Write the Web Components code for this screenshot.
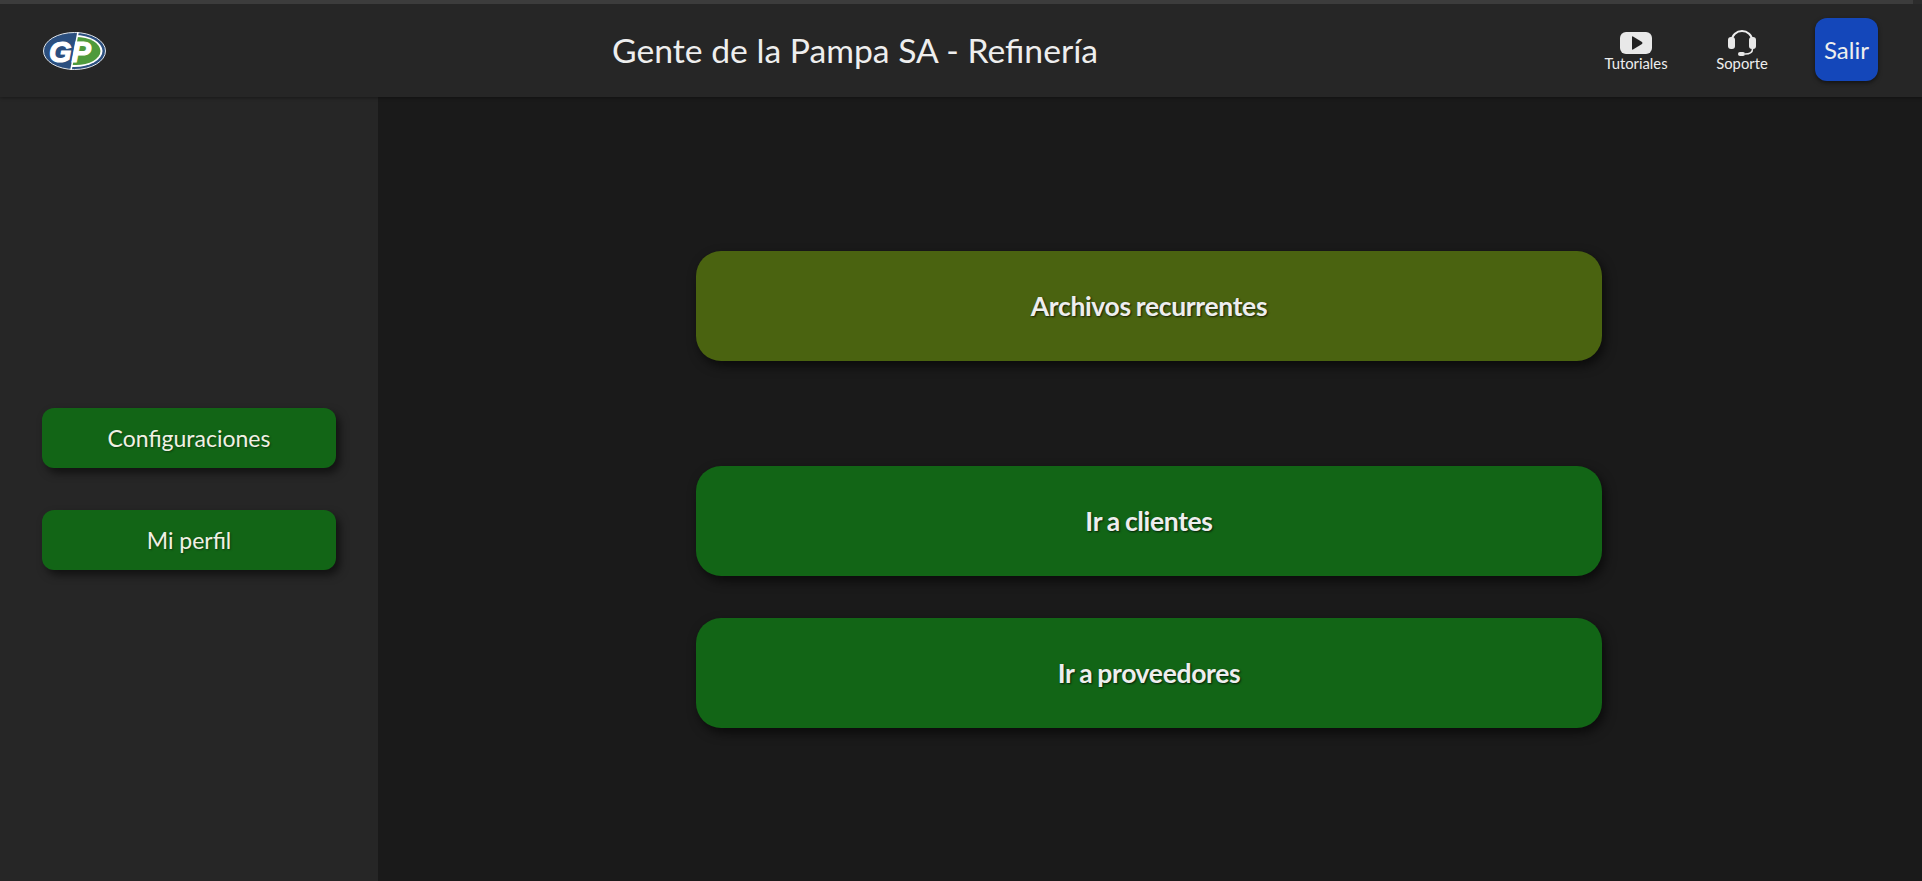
<!DOCTYPE html>
<html lang="es">
<head>
<meta charset="utf-8">
<title>Gente de la Pampa SA - Refinería</title>
<style>
  html, body { margin: 0; height: 100%; background: #1a1a1a; overflow: hidden; }
  body { font-family: Lato, "Liberation Sans", sans-serif; color: #eee; }
</style>
</head>
<body>
<app-shell>
  <app-header slot="header" title-text="Gente de la Pampa SA - Refinería"></app-header>
  <side-bar slot="side">
    <green-button>Configuraciones</green-button>
    <green-button>Mi perfil</green-button>
  </side-bar>
  <main-panel slot="main">
    <big-button color="#4a6310">Archivos recurrentes</big-button>
    <big-button>Ir a clientes</big-button>
    <big-button>Ir a proveedores</big-button>
  </main-panel>
</app-shell>

<script>
class AppShell extends HTMLElement {
  constructor() {
    super();
    this.shadowDOM = this.attachShadow({ mode: "open" });
  }
  connectedCallback() {
    this.shadowDOM.innerHTML = `
      <style>
        :host { display: grid; grid-template-columns: 378px 1fr; grid-template-rows: 97px 784px; height: 881px; }
        .top { grid-column: 1 / 3; position: relative; z-index: 2; }
      </style>
      <div class="top"><slot name="header"></slot></div>
      <slot name="side"></slot>
      <slot name="main"></slot>
    `;
  }
}

class AppHeader extends HTMLElement {
  constructor() {
    super();
    this.shadowDOM = this.attachShadow({ mode: "open" });
  }
  connectedCallback() {
    this.shadowDOM.innerHTML = `
      <style>
        :host { display: block; height: 97px; background: #262626; box-shadow: 0 1px 3px rgba(0,0,0,.35); }
        .strip { height: 4px; background: linear-gradient(to right, #3c3c3c 1913px, #2c2c2c 1913px); }
        header { height: 93px; display: flex; align-items: center; box-sizing: border-box; padding: 0 44px 0 43px; }
        svg { display: block; }
        .logo { width: 63px; height: 38px; flex: none; }
        h1 { margin: -2px 0 0 506px; font-size: 33.700px; font-weight: 400; color: #eeeeee; white-space: nowrap; }
        .links { display: flex; align-items: center; margin-left: auto; }
        .link { width: 90px; display: flex; flex-direction: column; align-items: center; font-size: 14.800px; line-height: 16px; color: #eeeeee; margin-top: 2px; }
        .link .play { margin-bottom: 1px; }
        .link .headset { margin: -2px 0 -1px; }
        .soporte { margin-left: 16px; }
        .salir { width: 63px; height: 63px; margin-left: 28px; margin-top: -2px; border-radius: 12px; background: #1447ba; color: #eee; font-size: 24px; display: flex; align-items: center; justify-content: center; box-shadow: 0 2px 4px rgba(0,0,0,.5); }
      </style>
      <div class="strip"></div>
      <header>
        <svg class="logo" viewBox="0 0 63 38">
          <defs>
            <clipPath id="right"><path d="M35 0 H63 V38 H28 Z"/></clipPath>
          </defs>
          <ellipse cx="31.500" cy="19" rx="31" ry="18.500" fill="#2b4f7f" stroke="#dfe5ec" stroke-width="1"/>
          <g clip-path="url(#right)">
            <ellipse cx="31.500" cy="19" rx="28" ry="16" fill="#fff"/>
            <ellipse cx="33" cy="19" rx="24.500" ry="14" fill="#4e9a3c"/>
          </g>
          <path d="M35 0 L28 38" stroke="#fff" stroke-width="1.500"/>
          <text x="6" y="30" font-family="Liberation Sans" font-style="italic" font-weight="700" font-size="30" fill="#fff" stroke="#fff" stroke-width="1.200" textLength="42" lengthAdjust="spacingAndGlyphs">GP</text>
        </svg>
        <h1>${this.getAttribute("title-text")}</h1>
        <div class="links">
          <div class="link">
            <svg class="play" width="32" height="22" viewBox="0 0 32 22"><rect width="32" height="22" rx="6" fill="#e8e8e8"/><path d="M12 5 Q12 4 13 4.500 L22 10 Q23 11 22 12 L13 17.500 Q12 18 12 17 Z" fill="#222"/></svg>
            Tutoriales
          </div>
          <div class="link soporte">
            <svg class="headset" width="28" height="26" viewBox="0 0 28 26"><path d="M4 10 V10 A10 9 0 0 1 24 10" fill="none" stroke="#eee" stroke-width="2"/><rect x="0" y="7" width="7" height="12" rx="3" fill="#e8e8e8"/><rect x="21" y="7" width="7" height="12" rx="3" fill="#e8e8e8"/><path d="M24.500 19 Q24.500 24 17 24" fill="none" stroke="#eee" stroke-width="1.500"/><rect x="10" y="22" width="7" height="4" rx="2" fill="#e8e8e8"/></svg>
            Soporte
          </div>
          <div class="salir">Salir</div>
        </div>
      </header>
    `;
  }
}

class SideBar extends HTMLElement {
  constructor() {
    super();
    this.shadowDOM = this.attachShadow({ mode: "open" });
  }
  connectedCallback() {
    this.shadowDOM.innerHTML = `
      <style>
        :host { display: flex; flex-direction: column; gap: 42px; box-sizing: border-box; padding: 311px 42px 0; background: #262626; }
      </style>
      <slot></slot>
    `;
  }
}

class GreenButton extends HTMLElement {
  constructor() {
    super();
    this.shadowDOM = this.attachShadow({ mode: "open" });
  }
  connectedCallback() {
    this.shadowDOM.innerHTML = `
      <style>
        :host { display: flex; align-items: center; justify-content: center; height: 60px; border-radius: 12px; background: #126516; color: #f0f0e4; font-size: 23px; box-shadow: 4px 5px 9px rgba(0,0,0,.55); text-shadow: 1px 1px 2px rgba(0,0,0,.4); }
      </style>
      <slot></slot>
    `;
  }
}

class MainPanel extends HTMLElement {
  constructor() {
    super();
    this.shadowDOM = this.attachShadow({ mode: "open" });
  }
  connectedCallback() {
    this.shadowDOM.innerHTML = `
      <style>
        :host { display: flex; flex-direction: column; box-sizing: border-box; padding: 154px 320px 0 318px; background: #1a1a1a; }
        ::slotted(:nth-child(2)) { margin-top: 105px; }
        ::slotted(:nth-child(3)) { margin-top: 42px; }
      </style>
      <slot></slot>
    `;
  }
}

class BigButton extends HTMLElement {
  constructor() {
    super();
    this.shadowDOM = this.attachShadow({ mode: "open" });
  }
  connectedCallback() {
    this.shadowDOM.innerHTML = `
      <style>
        :host { display: flex; align-items: center; justify-content: center; height: 110px; border-radius: 25px; background: ${this.getAttribute("color") || "#126516"}; color: #eeeeee; font-size: 26.500px; font-weight: 700; letter-spacing: -.35px; word-spacing: -1px; box-shadow: 3px 5px 11px rgba(0,0,0,.6); text-shadow: 1px 1px 2px rgba(0,0,0,.7); }
      </style>
      <slot></slot>
    `;
  }
}

customElements.define("app-shell", AppShell);
customElements.define("app-header", AppHeader);
customElements.define("side-bar", SideBar);
customElements.define("green-button", GreenButton);
customElements.define("main-panel", MainPanel);
customElements.define("big-button", BigButton);
</script>
</body>
</html>
